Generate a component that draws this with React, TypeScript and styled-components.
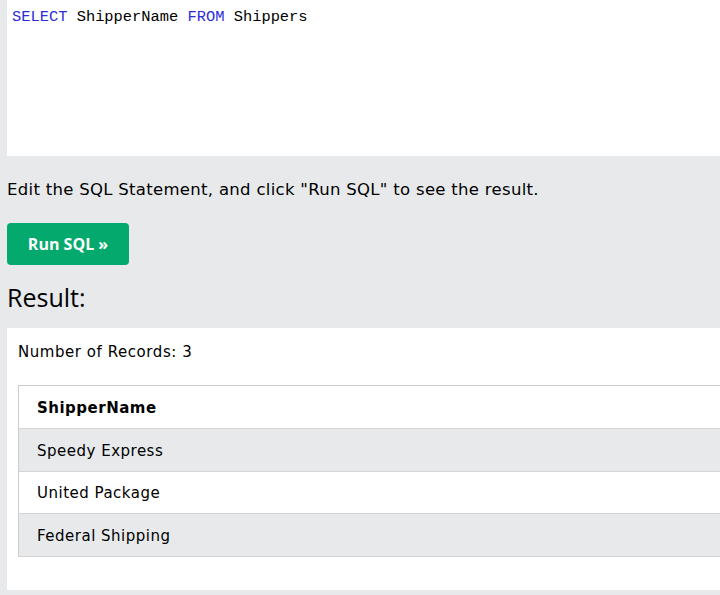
import React from "react";
import styled, { createGlobalStyle } from "styled-components";

const Global = createGlobalStyle`
  html, body { margin: 0; padding: 0; overflow: hidden; background: #e7e9eb; }
  body { font-family: "DejaVu Sans", Verdana, sans-serif; color: #000; }
`;

const Page = styled.div`
  width: 800px;
  padding-left: 7px;
  height: 595px;
  background: #e7e9eb;
`;

const Editor = styled.div`
  background: #fff;
  height: 156px;
  padding: 6px 0 0 5px;
  box-sizing: border-box;
  font-family: "Liberation Mono", "DejaVu Sans Mono", monospace;
  font-size: 15.4px;
  line-height: 22px;
  white-space: pre;
`;

const Kw = styled.span`
  color: #2b2bd8;
`;

const Hint = styled.p`
  margin: 0;
  padding-top: 23px;
  font-size: 16.5px;
  letter-spacing: 0.3px;
  line-height: 22px;
  height: 20px;
`;

const RunButton = styled.button`
  margin-top: 24px;
  display: block;
  width: 122px;
  height: 42px;
  border: none;
  border-radius: 4px;
  background: #04aa6d;
  color: #fff;
  font-family: "Open Sans", "Noto Sans", sans-serif;
  font-weight: 700;
  font-size: 16px;
  padding: 0;
`;

const Heading = styled.h2`
  margin: 0;
  padding-top: 19px;
  font-family: "Open Sans", "Noto Sans", sans-serif;
  font-weight: 400;
  font-size: 25px;
  line-height: 27px;
  height: 44px;
`;

const ResultBox = styled.div`
  background: #fff;
  height: 262px;
  padding: 13px 11px 0;
  box-sizing: border-box;
`;

const Count = styled.div`
  font-size: 15px;
  letter-spacing: 0.55px;
  line-height: 22px;
`;

const Table = styled.table`
  margin-top: 22px;
  width: 100%;
  border-collapse: collapse;
  border: 1px solid #ccc;
  border-right: none;
  font-size: 15px;
  letter-spacing: 0.5px;
`;

const Row = styled.tr<{ $shade?: boolean }>`
  background: ${(p) => (p.$shade ? "#e7e9eb" : "#fff")};
  border-bottom: 1px solid #d5d5d5;
`;

const Th = styled.th`
  text-align: left;
  font-weight: 700;
  height: 42.75px;
  padding: 2px 0 0 18px;
  box-sizing: border-box;
`;

const Td = styled.td`
  height: 42.75px;
  padding: 2px 0 0 18px;
  box-sizing: border-box;
`;

const rows = ["Speedy Express", "United Package", "Federal Shipping"];

export default function App() {
  return (
    <>
      <Global />
      <Page>
        <Editor>
          <Kw>SELECT</Kw> ShipperName <Kw>FROM</Kw> Shippers
        </Editor>
        <Hint>Edit the SQL Statement, and click "Run SQL" to see the result.</Hint>
        <RunButton>Run SQL »</RunButton>
        <Heading>Result:</Heading>
        <ResultBox>
          <Count>Number of Records: 3</Count>
          <Table>
            <tbody>
              <Row>
                <Th>ShipperName</Th>
              </Row>
              {rows.map((r, i) => (
                <Row key={r} $shade={i % 2 === 0}>
                  <Td>{r}</Td>
                </Row>
              ))}
            </tbody>
          </Table>
        </ResultBox>
      </Page>
    </>
  );
}
